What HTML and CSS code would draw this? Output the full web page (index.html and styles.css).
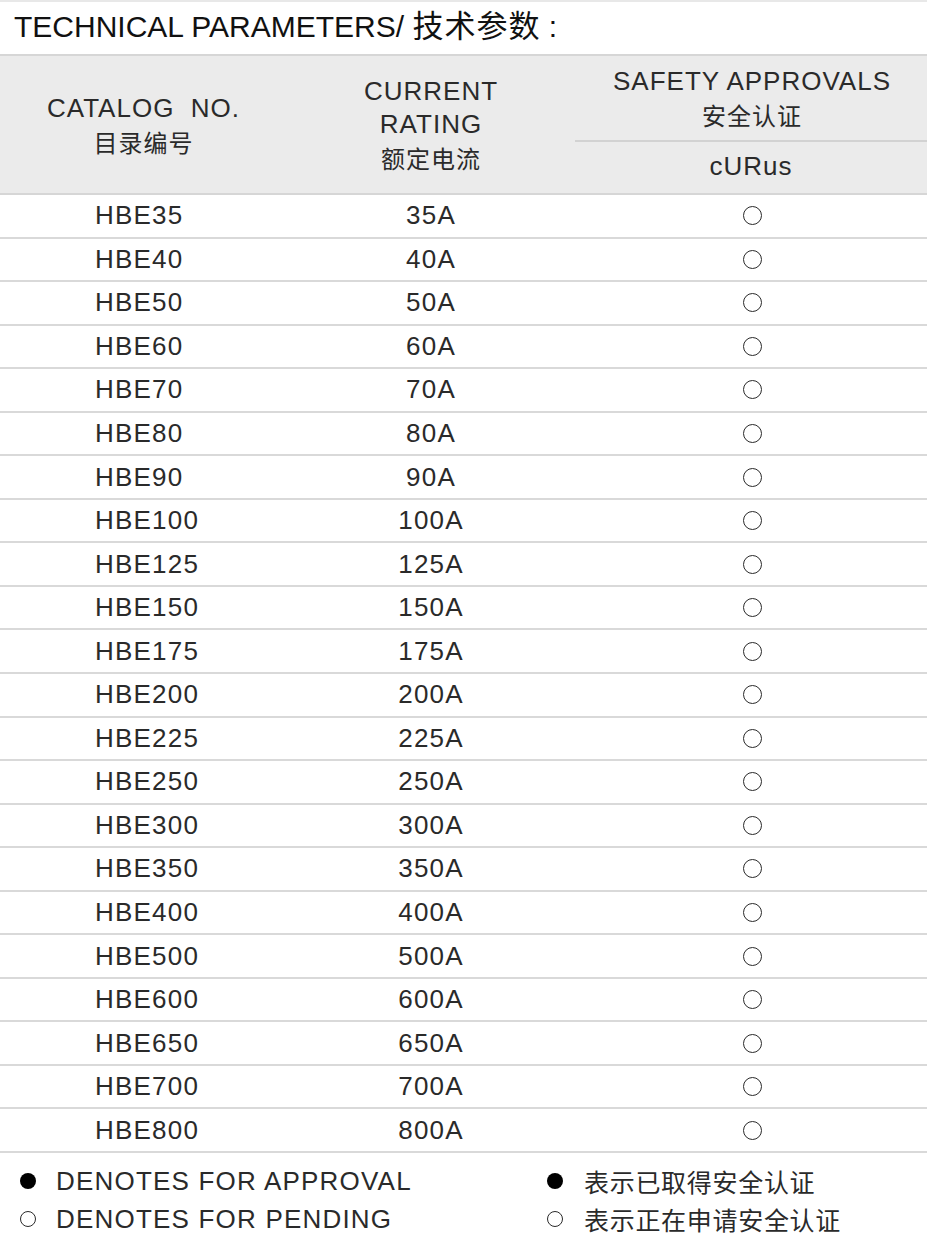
FILE: index.html
```html
<!DOCTYPE html>
<html lang="zh">
<head>
<meta charset="utf-8">
<title>Technical Parameters</title>
<link rel="stylesheet" href="styles.css">
</head>
<body>
<div class="page">
  <div class="title">TECHNICAL PARAMETERS/ <span class="tzh">技术参数</span> :</div>

  <div class="header">
    <div class="hcell">
      <div class="en">CATALOG&nbsp; NO.</div>
      <div class="zh">目录编号</div>
    </div>
    <div class="hcell">
      <div class="en">CURRENT</div>
      <div class="en">RATING</div>
      <div class="zh">额定电流</div>
    </div>
    <div class="hsafety">
      <div class="hcell top">
        <div class="en">SAFETY APPROVALS</div>
        <div class="zh">安全认证</div>
      </div>
      <div class="hcell bottom">
        <div class="en">cURus</div>
      </div>
    </div>
  </div>

  <div class="rows">
    <div class="row"><div class="cat">HBE35</div><div class="amp">35A</div><div class="mark"><span class="ring"></span></div></div>
    <div class="row"><div class="cat">HBE40</div><div class="amp">40A</div><div class="mark"><span class="ring"></span></div></div>
    <div class="row"><div class="cat">HBE50</div><div class="amp">50A</div><div class="mark"><span class="ring"></span></div></div>
    <div class="row"><div class="cat">HBE60</div><div class="amp">60A</div><div class="mark"><span class="ring"></span></div></div>
    <div class="row"><div class="cat">HBE70</div><div class="amp">70A</div><div class="mark"><span class="ring"></span></div></div>
    <div class="row"><div class="cat">HBE80</div><div class="amp">80A</div><div class="mark"><span class="ring"></span></div></div>
    <div class="row"><div class="cat">HBE90</div><div class="amp">90A</div><div class="mark"><span class="ring"></span></div></div>
    <div class="row"><div class="cat">HBE100</div><div class="amp">100A</div><div class="mark"><span class="ring"></span></div></div>
    <div class="row"><div class="cat">HBE125</div><div class="amp">125A</div><div class="mark"><span class="ring"></span></div></div>
    <div class="row"><div class="cat">HBE150</div><div class="amp">150A</div><div class="mark"><span class="ring"></span></div></div>
    <div class="row"><div class="cat">HBE175</div><div class="amp">175A</div><div class="mark"><span class="ring"></span></div></div>
    <div class="row"><div class="cat">HBE200</div><div class="amp">200A</div><div class="mark"><span class="ring"></span></div></div>
    <div class="row"><div class="cat">HBE225</div><div class="amp">225A</div><div class="mark"><span class="ring"></span></div></div>
    <div class="row"><div class="cat">HBE250</div><div class="amp">250A</div><div class="mark"><span class="ring"></span></div></div>
    <div class="row"><div class="cat">HBE300</div><div class="amp">300A</div><div class="mark"><span class="ring"></span></div></div>
    <div class="row"><div class="cat">HBE350</div><div class="amp">350A</div><div class="mark"><span class="ring"></span></div></div>
    <div class="row"><div class="cat">HBE400</div><div class="amp">400A</div><div class="mark"><span class="ring"></span></div></div>
    <div class="row"><div class="cat">HBE500</div><div class="amp">500A</div><div class="mark"><span class="ring"></span></div></div>
    <div class="row"><div class="cat">HBE600</div><div class="amp">600A</div><div class="mark"><span class="ring"></span></div></div>
    <div class="row"><div class="cat">HBE650</div><div class="amp">650A</div><div class="mark"><span class="ring"></span></div></div>
    <div class="row"><div class="cat">HBE700</div><div class="amp">700A</div><div class="mark"><span class="ring"></span></div></div>
    <div class="row"><div class="cat">HBE800</div><div class="amp">800A</div><div class="mark"><span class="ring"></span></div></div>
  </div>

  <div class="legend">
    <div class="litem"><span class="dot"></span><span class="len">DENOTES FOR APPROVAL</span></div>
    <div class="litem right"><span class="dot"></span><span class="lzh">表示已取得安全认证</span></div>
    <div class="litem"><span class="ring small"></span><span class="len">DENOTES FOR PENDING</span></div>
    <div class="litem right"><span class="ring small"></span><span class="lzh">表示正在申请安全认证</span></div>
  </div>
</div>
</body>
</html>
```

FILE: styles.css
```css
html, body {
  margin: 0;
  padding: 0;
  background: #ffffff;
}

body {
  font-family: "Liberation Sans", Arial, "Noto Sans CJK SC", sans-serif;
  color: #2a2a2a;
}

.page {
  width: 927px;
  overflow: hidden;
}

.title {
  height: 52px;
  line-height: 50px;
  border-top: 2px solid #e8e8e8;
  border-bottom: 2px solid #d6d6d6;
  padding-left: 14px;
  font-size: 30px;
  color: #111;
  white-space: nowrap;
}

.tzh {
  font-family: "Noto Sans CJK SC", sans-serif;
  font-size: 31px;
  line-height: 1;
  letter-spacing: 1px;
}

.header {
  display: grid;
  grid-template-columns: 287px 288px 1fr;
  height: 137px;
  background: #ebebeb;
  border-bottom: 2px solid #d6d6d6;
}

.hcell {
  display: flex;
  flex-direction: column;
  align-items: center;
  justify-content: center;
  line-height: 33px;
}

.hcell .en {
  font-size: 26px;
  letter-spacing: 1px;
  white-space: nowrap;
}

.hcell .zh {
  font-family: "Noto Sans CJK SC", sans-serif;
  font-size: 24px;
  letter-spacing: 1px;
  white-space: nowrap;
}

.hsafety {
  display: grid;
  grid-template-rows: 86px 49px;
}

.hcell.top {
  border-bottom: 2px solid #d2d2d2;
  padding-left: 2px;
}

.rows {
  display: flex;
  flex-direction: column;
}

.row {
  display: grid;
  grid-template-columns: 287px 288px 1fr;
  height: 41.55px;
  border-bottom: 2px solid #d9d9d9;
  align-items: center;
  font-size: 26px;
  letter-spacing: 1.2px;
}

.cat {
  padding-left: 95px;
  white-space: nowrap;
}

.amp {
  text-align: center;
  white-space: nowrap;
}

.mark {
  display: flex;
  justify-content: center;
  align-items: center;
  padding-left: 3px;
}

.ring {
  display: inline-block;
  box-sizing: border-box;
  width: 19px;
  height: 19px;
  border: 1.5px solid #2a2a2a;
  border-radius: 50%;
}

.ring.small {
  width: 16px;
  height: 16px;
  border-width: 1.4px;
}

.legend {
  display: grid;
  grid-template-columns: 527px 1fr;
  grid-auto-rows: 38px;
  padding-top: 9px;
}

.litem {
  display: flex;
  align-items: center;
  padding-left: 20px;
  gap: 20px;
  white-space: nowrap;
}

.litem.right {
  gap: 21px;
}

.dot {
  display: inline-block;
  width: 16px;
  height: 16px;
  border-radius: 50%;
  background: #000;
}

.len {
  font-size: 26px;
  letter-spacing: 1.2px;
}

.lzh {
  font-family: "Noto Sans CJK SC", sans-serif;
  font-size: 25px;
  letter-spacing: 0.7px;
}
```
